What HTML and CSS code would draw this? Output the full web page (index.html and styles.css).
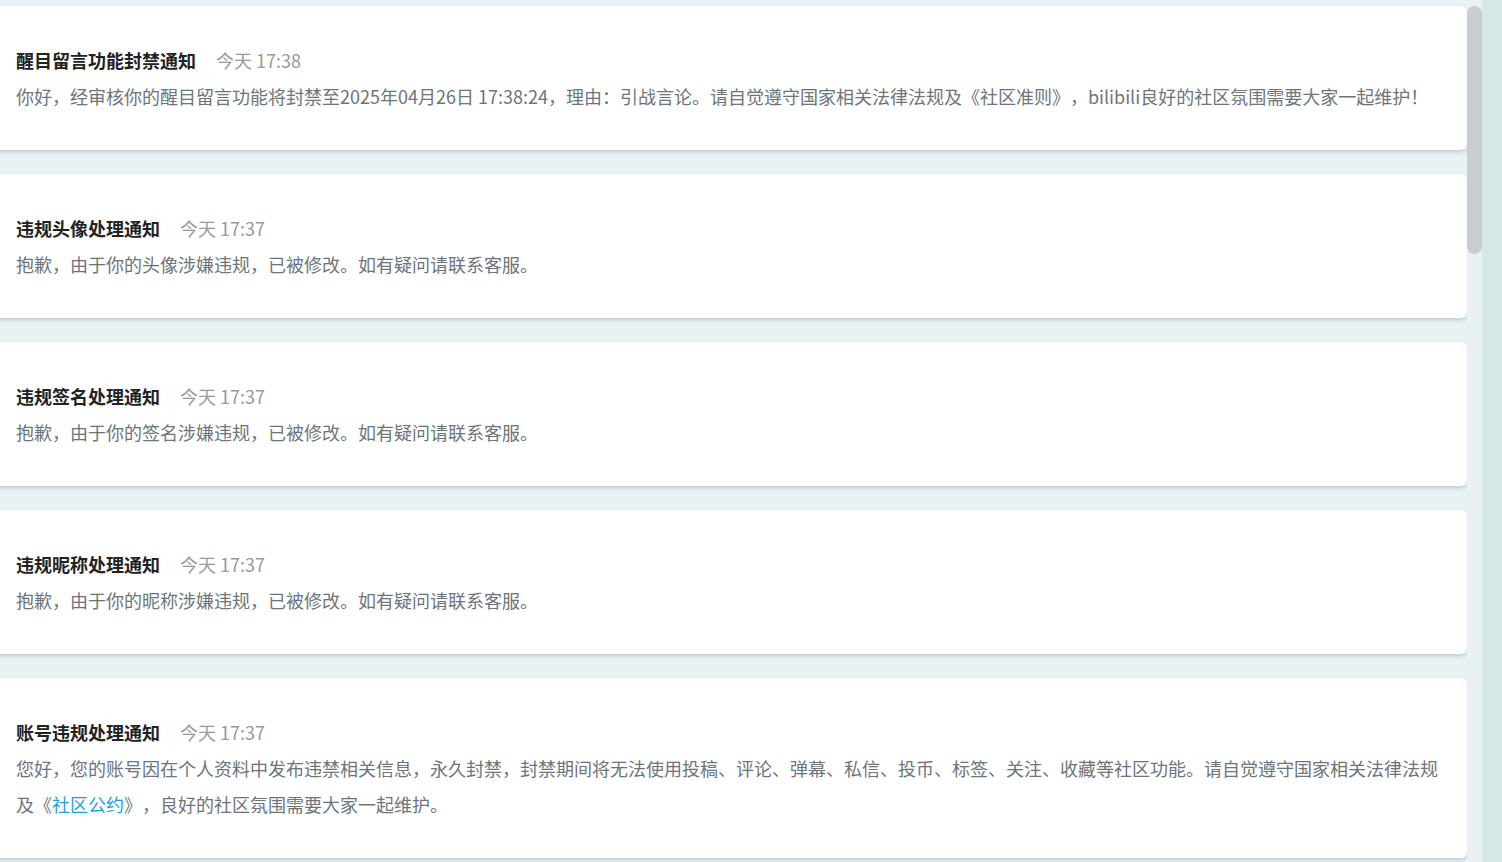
FILE: index.html
```html
<!DOCTYPE html>
<html lang="zh-CN">
<head>
    <meta charset="UTF-8">
    <meta name="viewport" content="width=device-width, initial-scale=1.0">
    <title>系统通知</title>
    <link rel="stylesheet" href="styles.css">
</head>
<body>
    <div class="page">
        <div class="notice-scroll">
            <div class="notice-list">
                <div class="notice">
                    <div class="notice-head">
                        <span class="notice-title">醒目留言功能封禁通知</span>
                        <span class="notice-time">今天 17:38</span>
                    </div>
                    <p class="notice-text">你好，经审核你的醒目留言功能将封禁至2025年04月26日 17:38:24，理由：引战言论。请自觉遵守国家相关法律法规及《社区准则》，bilibili良好的社区氛围需要大家一起维护！</p>
                </div>

                <div class="notice">
                    <div class="notice-head">
                        <span class="notice-title">违规头像处理通知</span>
                        <span class="notice-time">今天 17:37</span>
                    </div>
                    <p class="notice-text">抱歉，由于你的头像涉嫌违规，已被修改。如有疑问请联系客服。</p>
                </div>

                <div class="notice">
                    <div class="notice-head">
                        <span class="notice-title">违规签名处理通知</span>
                        <span class="notice-time">今天 17:37</span>
                    </div>
                    <p class="notice-text">抱歉，由于你的签名涉嫌违规，已被修改。如有疑问请联系客服。</p>
                </div>

                <div class="notice">
                    <div class="notice-head">
                        <span class="notice-title">违规昵称处理通知</span>
                        <span class="notice-time">今天 17:37</span>
                    </div>
                    <p class="notice-text">抱歉，由于你的昵称涉嫌违规，已被修改。如有疑问请联系客服。</p>
                </div>

                <div class="notice">
                    <div class="notice-head">
                        <span class="notice-title">账号违规处理通知</span>
                        <span class="notice-time">今天 17:37</span>
                    </div>
                    <p class="notice-text">您好，您的账号因在个人资料中发布违禁相关信息，永久封禁，封禁期间将无法使用投稿、评论、弹幕、私信、投币、标签、关注、收藏等社区功能。请自觉遵守国家相关法律法规及《<a class="notice-link" href="#">社区公约</a>》，良好的社区氛围需要大家一起维护。</p>
                </div>
            </div>
        </div>
        <div class="scrollbar">
            <div class="scrollbar-thumb"></div>
        </div>
    </div>
</body>
</html>
```

FILE: styles.css
```css
* {
    margin: 0;
    padding: 0;
    box-sizing: border-box;
}

body {
    font-family: "Noto Sans CJK SC", "Noto Sans", sans-serif;
    background: #d5e9e6;
    height: 100vh;
    overflow: hidden;
}

.page {
    display: flex;
    width: 1482px;
    height: 100vh;
    background: #e9f2f3;
    padding-top: 6px;
}

.notice-scroll {
    flex: 1;
    overflow: hidden;
}

.notice-list {
    display: flex;
    flex-direction: column;
    gap: 24px;
    padding-bottom: 6px;
}

.scrollbar {
    width: 15px;
    flex-shrink: 0;
}

.scrollbar-thumb {
    height: 248px;
    background: #c9ccd1;
    border-radius: 8px;
}

.notice {
    margin-left: -10px;
    background: #fff;
    border-radius: 6px;
    box-shadow: 0 2px 4px rgba(98, 128, 170, 0.35);
    padding: 36px 24px 36px 26px;
}

.notice-head {
    display: flex;
    align-items: center;
    gap: 20px;
    line-height: 36px;
    font-size: 18px;
}

.notice-title {
    color: #222;
    font-weight: bold;
}

.notice-time {
    color: #999;
}

.notice-text {
    font-size: 18px;
    line-height: 36px;
    color: #6d757a;
    text-spacing-trim: space-all;
}

.notice-link {
    color: #1ba4dc;
    text-decoration: none;
}
```
